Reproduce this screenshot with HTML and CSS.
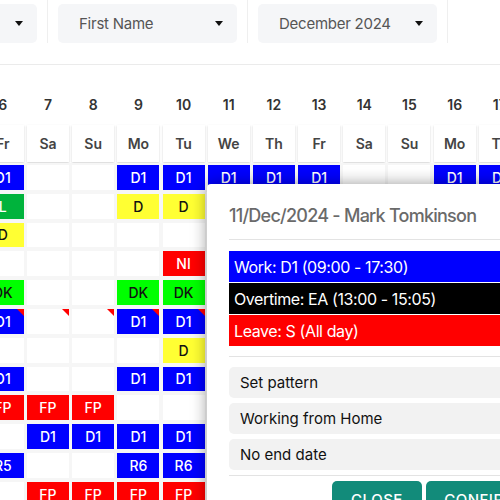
FILE: index.html
```html
<!DOCTYPE html>
<html>
<head>
<meta charset="utf-8">
<link rel="stylesheet" href="styles.css">
</head>
<body>
<div class="filters">
  <div class="fcell"><div class="select"><span>Last Name</span><i class="arrow"></i></div></div>
  <div class="fcell"><div class="select"><span>First Name</span><i class="arrow"></i></div></div>
  <div class="fcell"><div class="select"><span>December 2024</span><i class="arrow"></i></div></div>
  <div class="fcell"></div>
</div>

<div class="cal">
  <div class="dates">
    <div class="d">6</div><div class="d">7</div><div class="d">8</div><div class="d">9</div><div class="d">10</div><div class="d">11</div><div class="d">12</div><div class="d">13</div><div class="d">14</div><div class="d">15</div><div class="d">16</div><div class="d">17</div>
  </div>
  <div class="days">
    <div class="dy"><div class="dn">Fr</div></div><div class="dy"><div class="dn">Sa</div></div><div class="dy"><div class="dn">Su</div></div><div class="dy"><div class="dn">Mo</div></div><div class="dy"><div class="dn">Tu</div></div><div class="dy"><div class="dn">We</div></div><div class="dy"><div class="dn">Th</div></div><div class="dy"><div class="dn">Fr</div></div><div class="dy"><div class="dn">Sa</div></div><div class="dy"><div class="dn">Su</div></div><div class="dy"><div class="dn">Mo</div></div><div class="dy"><div class="dn">Tu</div></div>
  </div>

  <div class="row">
    <div class="c"><div class="b blue">D1</div></div>
    <div class="c"><div class="b"></div></div>
    <div class="c"><div class="b"></div></div>
    <div class="c"><div class="b blue">D1</div></div>
    <div class="c"><div class="b blue">D1</div></div>
    <div class="c"><div class="b blue">D1</div></div>
    <div class="c"><div class="b blue">D1</div></div>
    <div class="c"><div class="b blue">D1</div></div>
    <div class="c"><div class="b"></div></div>
    <div class="c"><div class="b"></div></div>
    <div class="c"><div class="b blue">D1</div></div>
    <div class="c"><div class="b blue">D1</div></div>
  </div>
  <div class="row">
    <div class="c"><div class="b dgreen">L</div></div>
    <div class="c"><div class="b"></div></div>
    <div class="c"><div class="b"></div></div>
    <div class="c"><div class="b yellow">D</div></div>
    <div class="c"><div class="b yellow">D</div></div>
  </div>
  <div class="row">
    <div class="c"><div class="b yellow">D</div></div>
    <div class="c"><div class="b"></div></div>
    <div class="c"><div class="b"></div></div>
    <div class="c"><div class="b"></div></div>
    <div class="c"><div class="b"></div></div>
  </div>
  <div class="row">
    <div class="c"><div class="b"></div></div>
    <div class="c"><div class="b"></div></div>
    <div class="c"><div class="b"></div></div>
    <div class="c"><div class="b"></div></div>
    <div class="c"><div class="b red">NI</div></div>
  </div>
  <div class="row">
    <div class="c"><div class="b green">DK</div></div>
    <div class="c"><div class="b"></div></div>
    <div class="c"><div class="b"></div></div>
    <div class="c"><div class="b green">DK</div></div>
    <div class="c"><div class="b green">DK</div></div>
  </div>
  <div class="row">
    <div class="c"><div class="b blue corner">D1</div></div>
    <div class="c"><div class="b corner"></div></div>
    <div class="c"><div class="b corner"></div></div>
    <div class="c"><div class="b blue corner">D1</div></div>
    <div class="c"><div class="b blue corner">D1</div></div>
  </div>
  <div class="row">
    <div class="c"><div class="b"></div></div>
    <div class="c"><div class="b"></div></div>
    <div class="c"><div class="b"></div></div>
    <div class="c"><div class="b"></div></div>
    <div class="c"><div class="b yellow">D</div></div>
  </div>
  <div class="row">
    <div class="c"><div class="b blue">D1</div></div>
    <div class="c"><div class="b"></div></div>
    <div class="c"><div class="b"></div></div>
    <div class="c"><div class="b blue">D1</div></div>
    <div class="c"><div class="b blue">D1</div></div>
  </div>
  <div class="row">
    <div class="c"><div class="b red">FP</div></div>
    <div class="c"><div class="b red">FP</div></div>
    <div class="c"><div class="b red">FP</div></div>
    <div class="c"><div class="b"></div></div>
    <div class="c"><div class="b"></div></div>
  </div>
  <div class="row">
    <div class="c"><div class="b"></div></div>
    <div class="c"><div class="b blue">D1</div></div>
    <div class="c"><div class="b blue">D1</div></div>
    <div class="c"><div class="b blue">D1</div></div>
    <div class="c"><div class="b blue">D1</div></div>
  </div>
  <div class="row">
    <div class="c"><div class="b blue">R5</div></div>
    <div class="c"><div class="b"></div></div>
    <div class="c"><div class="b"></div></div>
    <div class="c"><div class="b blue">R6</div></div>
    <div class="c"><div class="b blue">R6</div></div>
  </div>
  <div class="row">
    <div class="c"><div class="b"></div></div>
    <div class="c"><div class="b red">FP</div></div>
    <div class="c"><div class="b red">FP</div></div>
    <div class="c"><div class="b red">FP</div></div>
    <div class="c"><div class="b red">FP</div></div>
  </div>
</div>

<div class="modal">
  <div class="mtitle">11/Dec/2024 - Mark Tomkinson</div>
  <div class="bars">
    <div class="bar bwork">Work: D1 (09:00 - 17:30)</div>
    <div class="bar bover">Overtime: EA (13:00 - 15:05)</div>
    <div class="bar bleave">Leave: S (All day)</div>
  </div>
  <div class="opts">
    <div class="opt">Set pattern</div>
    <div class="opt">Working from Home</div>
    <div class="opt">No end date</div>
  </div>
  <div class="btns">
    <div class="btn btn-close">CLOSE</div>
    <div class="btn btn-confirm">CONFIRM</div>
  </div>
</div>
</body>
</html>
```
FILE: styles.css
```css
html, body {
  margin: 0;
  padding: 0;
}
body {
  width: 500px;
  height: 500px;
  overflow: hidden;
  position: relative;
  background: #fff;
  font-family: Inter, "Noto Sans", sans-serif;
}

/* filter bar */
.filters {
  display: flex;
  margin-left: -152px;
  padding-bottom: 21px;
  border-bottom: 1px solid #ebebeb;
}
.fcell {
  flex: 0 0 200px;
  box-sizing: border-box;
  height: 43px;
  padding: 4px 10px 0 10px;
  border-right: 1px solid #efefef;
}
.select {
  height: 39px;
  box-sizing: border-box;
  background: #f5f6f8;
  border-radius: 5px;
  display: flex;
  align-items: center;
  justify-content: space-between;
  padding: 0 14px 0 21px;
  font-size: 15px;
  letter-spacing: -0.25px;
  color: #555;
}
.arrow {
  width: 0;
  height: 0;
  border-left: 4px solid transparent;
  border-right: 4px solid transparent;
  border-top: 5px solid #111;
}

/* calendar */
.cal {
  margin-left: -19.8px;
  padding-top: 20px;
}
.dates, .days, .row {
  display: flex;
}
.dates {
  height: 38px;
  align-items: center;
}
.d {
  flex: 0 0 45.2px;
  text-align: center;
  font-size: 14px;
  font-weight: 600;
  color: #333;
}
.days {
  height: 40px;
}
.dy {
  flex: 0 0 45.2px;
  box-sizing: border-box;
  padding: 2px 1.6px 0;
}
.dn {
  height: 37px;
  background: #fff;
  box-shadow: 0 1px 2px rgba(0,0,0,0.18);
  display: flex;
  align-items: center;
  justify-content: center;
  font-size: 14px;
  font-weight: 600;
  color: #444;
}
.row {
  height: 28.8px;
}
.c {
  flex: 0 0 45.2px;
  box-sizing: border-box;
  padding: 2px 1.6px;
  background: #f6f6f6;
}
.b {
  height: 100%;
  background: #fff;
  display: flex;
  align-items: center;
  justify-content: center;
  font-size: 14px;
  font-weight: 500;
  position: relative;
  overflow: hidden;
}
.blue { background: #0000ff; color: #fff; }
.red { background: #ff0000; color: #fff; }
.yellow { background: #ffff33; color: #111; }
.green { background: #00ff00; color: #111; }
.dgreen { background: #00b33c; color: #fff; }
.corner::after {
  content: "";
  position: absolute;
  top: 0;
  right: 0;
  width: 0;
  height: 0;
  border-top: 7px solid #ff0000;
  border-left: 7px solid transparent;
}

/* modal */
.modal {
  position: absolute;
  left: 207px;
  top: 184px;
  width: 340px;
  height: 360px;
  box-sizing: border-box;
  background: #fff;
  border-radius: 4px;
  box-shadow: 0 0 16px rgba(0,0,0,0.4);
  padding: 20px 0 0 22px;
}
.mtitle {
  font-size: 18px;
  line-height: 24px;
  font-weight: 500;
  letter-spacing: -0.75px;
  color: #6a6a6a;
  padding-bottom: 11px;
  border-bottom: 1px solid #e3e3e3;
}
.bars {
  margin-top: 11px;
  padding-bottom: 10px;
  border-bottom: 1px solid #e3e3e3;
}
.bar {
  height: 31px;
  margin-bottom: 1px;
  display: flex;
  align-items: center;
  padding-left: 5px;
  font-size: 16px;
  letter-spacing: -0.4px;
  color: #fff;
}
.bar:last-child { margin-bottom: 0; }
.bwork { background: #0000ff; }
.bover { background: #000; }
.bleave { background: #ff0000; }
.opts {
  margin-top: 10px;
  display: flex;
  flex-direction: column;
  gap: 5px;
  padding-bottom: 5px;
  border-bottom: 1px solid #e3e3e3;
}
.opt {
  height: 31px;
  background: #f2f2f2;
  border-radius: 5px;
  display: flex;
  align-items: center;
  padding-left: 11px;
  font-size: 15px;
  color: #111;
}
.btns {
  margin-top: 5px;
  display: flex;
  gap: 4px;
  padding-left: 103px;
}
.btn {
  height: 36px;
  border-radius: 5px;
  background: #128b7a;
  color: #fff;
  font-size: 15px;
  font-weight: 500;
  letter-spacing: 0.5px;
  display: flex;
  align-items: center;
  justify-content: center;
}
.btn-close { width: 90px; }
.btn-confirm { width: 110px; }
```
